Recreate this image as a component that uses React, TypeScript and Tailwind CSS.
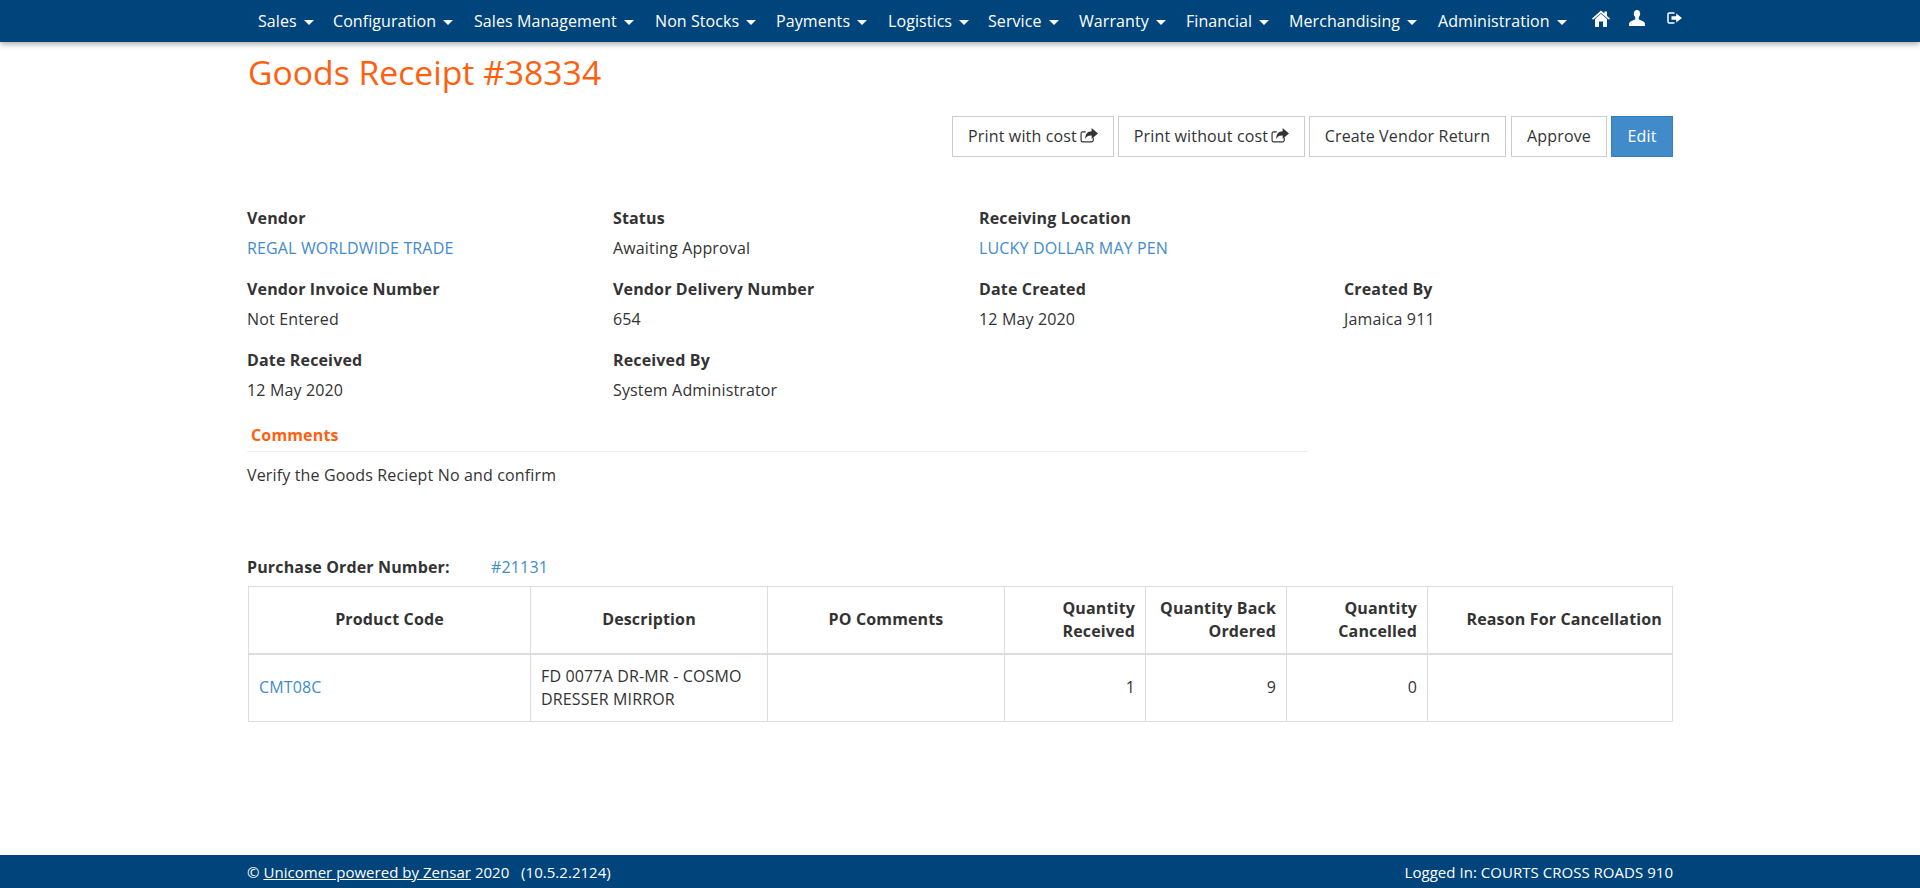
import React from "react";

const nav: [string, string][] = [
  ["Sales", "w-[75px]"],
  ["Configuration", "w-[141px]"],
  ["Sales Management", "w-[181px]"],
  ["Non Stocks", "w-[121px]"],
  ["Payments", "w-[112px]"],
  ["Logistics", "w-[100px]"],
  ["Service", "w-[91px]"],
  ["Warranty", "w-[107px]"],
  ["Financial", "w-[103px]"],
  ["Merchandising", "w-[149px]"],
  ["Administration", "w-[154px]"],
];

function Caret() {
  return <span className="inline-block ml-[7px] align-middle w-0 h-0 border-x-[5px] border-x-transparent border-t-[5px] border-t-white" />;
}

function Home() {
  return (
    <svg width="18" height="17" viewBox="0 0 18 17" fill="white">
      <path d="M3 9l6-5.2L15 9v8h-4v-5.5H7V17H3z" />
      <path d="M0 8.6L9 .6l3.4 3V1.5H15v4.4l3 2.7-1 1.2L9 2.9 1 9.800z" />
    </svg>
  );
}

function UserIcon() {
  return (
    <svg width="16" height="16" viewBox="0 0 16 16" fill="white">
      <path d="M8 0c2 0 3.200 1.500 3.200 3.600 0 1.700-.7 3-1.500 3.800v1.300c0 .8 1 1 2.600 1.700 1.600.7 3.700 1.600 3.700 3.400V16H0v-2.200c0-1.800 2.100-2.700 3.700-3.400 1.600-.7 2.600-.9 2.600-1.700V7.400C5.500 6.600 4.800 5.300 4.800 3.600 4.800 1.500 6 0 8 0z" />
    </svg>
  );
}

function LogOut() {
  return (
    <svg width="15" height="12" viewBox="0 0 15 12" fill="none">
      <path d="M7.500 1H2.200A1.200 1.200 0 0 0 1 2.200v7.600A1.200 1.200 0 0 0 2.200 11h5.300" stroke="white" strokeWidth="1.500" />
      <path d="M4.500 4.200h4.700V1.600L15 6l-5.800 4.400V7.800H4.500z" fill="white" />
    </svg>
  );
}

function Share() {
  return (
    <svg width="18" height="15" viewBox="0 0 17 14" className="ml-[3px] -mt-[1px]" fill="none">
      <path d="M5.500 3.500H2.500A1.500 1.500 0 0 0 1 5v6.500A1.500 1.500 0 0 0 2.500 13H11a1.500 1.500 0 0 0 1.500-1.500V9" stroke="#333" strokeWidth="1.100" />
      <path d="M11 0l6 5-6 5V7C8 7 6 7.500 5 10.500 4.700 6 7 3 11 3z" fill="#333" />
    </svg>
  );
}

function Field({ label, value, link }: { label: string; value: string; link?: boolean }) {
  return (
    <div className="h-[71px] pt-[3px]">
      <div className="font-bold text-[#333] leading-[20px] h-[20px]">{label}</div>
      <div className={"leading-[20px] mt-[10px] " + (link ? "text-[#428bca]" : "text-[#333]")}>{value}</div>
    </div>
  );
}

function Btn({ children, w }: { children: React.ReactNode; w: string }) {
  return <div className={"h-[41px] pb-[2px] flex items-center justify-center border border-[#ccc] bg-white text-[#333] " + w}>{children}</div>;
}

const th = "border border-[#ddd] border-b-2 px-[10px] font-bold text-[#333] leading-[23px] align-middle";
const td = "border border-[#ddd] px-[10px] text-[#333] leading-[23px] align-middle";

export default function App() {
  return (
    <div className="min-h-[888px] flex flex-col bg-white text-[16px] tracking-[0.15px] font-['Open_Sans',sans-serif] text-[#333]">
      <header className="h-[42px] bg-[#00447c] shadow-[0_2px_6px_rgba(0,0,0,0.35)] flex items-center pl-[258px] text-white tracking-[0.08px]">
        <nav className="flex items-center pb-[1px]">
          {nav.map(([n, w]) => (
            <span key={n} className={"whitespace-nowrap leading-[20px] " + w}>{n}<Caret /></span>
          ))}
        </nav>
        <div className="flex items-center -mt-[6px]">
          <Home />
          <span className="ml-[19px]"><UserIcon /></span>
          <span className="ml-[22px]"><LogOut /></span>
        </div>
      </header>
      <main className="flex-1 px-[247px]">
        <h1 className="text-[33.7px] tracking-normal leading-[36px] text-[#ff6010] mt-[12px] ml-[1px] font-normal">Goods Receipt #38334</h1>
        <div className="flex justify-end mt-[26px]">
          <Btn w="w-[162px]"><span>Print with cost</span><Share /></Btn>
          <span className="w-[4px]" />
          <Btn w="w-[187px]"><span>Print without cost</span><Share /></Btn>
          <span className="w-[4px]" />
          <Btn w="w-[197px]">Create Vendor Return</Btn>
          <span className="w-[5px]" />
          <Btn w="w-[96px]">Approve</Btn>
          <span className="w-[4px]" />
          <div className="h-[41px] w-[62px] pb-[2px] flex items-center justify-center border border-[#357ebd] bg-[#428bca] text-white">Edit</div>
        </div>
        <div className="grid grid-cols-[366px_366px_365px_329px] mt-[48px]">
          <Field label="Vendor" value="REGAL WORLDWIDE TRADE" link />
          <Field label="Status" value="Awaiting Approval" />
          <Field label="Receiving Location" value="LUCKY DOLLAR MAY PEN" link />
          <div />
          <Field label="Vendor Invoice Number" value="Not Entered" />
          <Field label="Vendor Delivery Number" value="654" />
          <Field label="Date Created" value="12 May 2020" />
          <Field label="Created By" value="Jamaica 911" />
          <Field label="Date Received" value="12 May 2020" />
          <Field label="Received By" value="System Administrator" />
        </div>
        <div className="w-[1061px] mt-[7px] border-b border-[#eee] h-[27px] pl-[4px] font-bold text-[#ff6010] leading-[20px]">Comments</div>
        <div className="mt-[13px] leading-[20px]">Verify the Goods Reciept No and confirm</div>
        <div className="flex mt-[72px] leading-[20px]">
          <span className="font-bold w-[244px]">Purchase Order Number:</span>
          <span className="text-[#428bca]">#21131</span>
        </div>
        <table className="w-[1424px] ml-[1px] table-fixed border-collapse mt-[9px]">
          <colgroup>
            <col className="w-[282px]" /><col className="w-[237px]" /><col className="w-[237px]" /><col className="w-[141px]" /><col className="w-[141px]" /><col className="w-[141px]" /><col className="w-[245px]" />
          </colgroup>
          <thead>
            <tr className="h-[67px]">
              <th className={th + " text-center"}>Product Code</th>
              <th className={th + " text-center"}>Description</th>
              <th className={th + " text-center"}>PO Comments</th>
              <th className={th + " text-right"}>Quantity Received</th>
              <th className={th + " text-right"}>Quantity Back Ordered</th>
              <th className={th + " text-right"}>Quantity Cancelled</th>
              <th className={th + " text-right"}>Reason For Cancellation</th>
            </tr>
          </thead>
          <tbody>
            <tr className="h-[68px]">
              <td className={td + " text-[#428bca]"}>CMT08C</td>
              <td className={td}>FD 0077A DR-MR - COSMO DRESSER MIRROR</td>
              <td className={td}></td>
              <td className={td + " text-right"}>1</td>
              <td className={td + " text-right"}>9</td>
              <td className={td + " text-right"}>0</td>
              <td className={td}></td>
            </tr>
          </tbody>
        </table>
      </main>
      <footer className="h-[33px] bg-[#00447c] text-white text-[15px] tracking-[0.03px] flex items-center justify-between px-[247px] leading-[20px]">
        <span>© <span className="underline">Unicomer powered by Zensar</span> 2020 &nbsp; (10.5.2.2124)</span>
        <span>Logged In: COURTS CROSS ROADS 910</span>
      </footer>
    </div>
  );
}
